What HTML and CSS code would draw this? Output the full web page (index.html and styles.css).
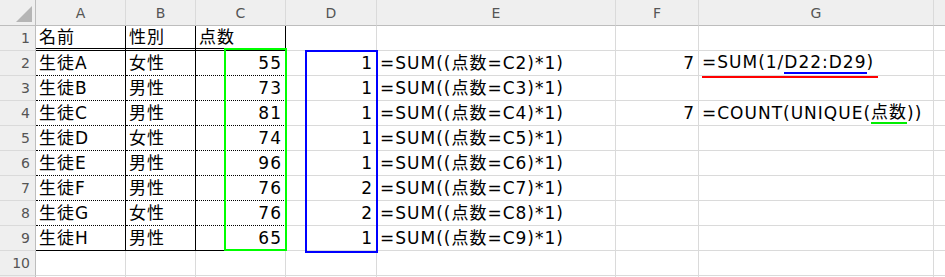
FILE: index.html
```html
<!DOCTYPE html>
<html lang="ja">
<head>
<meta charset="utf-8">
<title>Sheet</title>
<link rel="stylesheet" href="styles.css">
</head>
<body>
<div class="sheet">
  <!-- header row -->
  <div class="c corner"><span class="tri"></span></div>
  <div class="c hd">A</div>
  <div class="c hd">B</div>
  <div class="c hd">C</div>
  <div class="c hd">D</div>
  <div class="c hd">E</div>
  <div class="c hd">F</div>
  <div class="c hd">G</div>
  <div class="c hd last"></div>

  <!-- row 1 -->
  <div class="c rh">1</div>
  <div class="c bl b2">名前</div>
  <div class="c bl b2">性別</div>
  <div class="c bl b2">点数</div>
  <div class="c"></div>
  <div class="c"></div>
  <div class="c"></div>
  <div class="c"></div>
  <div class="c last"></div>

  <!-- row 2 -->
  <div class="c rh">2</div>
  <div class="c bl bd">生徒A</div>
  <div class="c bl bd">女性</div>
  <div class="c bl bd num">55</div>
  <div class="c num">1</div>
  <div class="c">=SUM((点数=C2)*1)</div>
  <div class="c num">7</div>
  <div class="c"><span class="ul-red">=SUM(1/<span class="ul-blue">D22:D29</span>)</span></div>
  <div class="c last"></div>

  <!-- row 3 -->
  <div class="c rh">3</div>
  <div class="c bl bd">生徒B</div>
  <div class="c bl bd">男性</div>
  <div class="c bl bd num">73</div>
  <div class="c num">1</div>
  <div class="c">=SUM((点数=C3)*1)</div>
  <div class="c"></div>
  <div class="c"></div>
  <div class="c last"></div>

  <!-- row 4 -->
  <div class="c rh">4</div>
  <div class="c bl bd">生徒C</div>
  <div class="c bl bd">男性</div>
  <div class="c bl bd num">81</div>
  <div class="c num">1</div>
  <div class="c">=SUM((点数=C4)*1)</div>
  <div class="c num">7</div>
  <div class="c">=COUNT(UNIQUE(<span class="ul-green">点数</span>))</div>
  <div class="c last"></div>

  <!-- row 5 -->
  <div class="c rh">5</div>
  <div class="c bl bd">生徒D</div>
  <div class="c bl bd">女性</div>
  <div class="c bl bd num">74</div>
  <div class="c num">1</div>
  <div class="c">=SUM((点数=C5)*1)</div>
  <div class="c"></div>
  <div class="c"></div>
  <div class="c last"></div>

  <!-- row 6 -->
  <div class="c rh">6</div>
  <div class="c bl bd">生徒E</div>
  <div class="c bl bd">男性</div>
  <div class="c bl bd num">96</div>
  <div class="c num">1</div>
  <div class="c">=SUM((点数=C6)*1)</div>
  <div class="c"></div>
  <div class="c"></div>
  <div class="c last"></div>

  <!-- row 7 -->
  <div class="c rh">7</div>
  <div class="c bl bd">生徒F</div>
  <div class="c bl bd">男性</div>
  <div class="c bl bd num">76</div>
  <div class="c num">2</div>
  <div class="c">=SUM((点数=C7)*1)</div>
  <div class="c"></div>
  <div class="c"></div>
  <div class="c last"></div>

  <!-- row 8 -->
  <div class="c rh">8</div>
  <div class="c bl bd">生徒G</div>
  <div class="c bl bd">女性</div>
  <div class="c bl bd num">76</div>
  <div class="c num">2</div>
  <div class="c">=SUM((点数=C8)*1)</div>
  <div class="c"></div>
  <div class="c"></div>
  <div class="c last"></div>

  <!-- row 9 -->
  <div class="c rh">9</div>
  <div class="c bl bb">生徒H</div>
  <div class="c bl bb">男性</div>
  <div class="c bl bb num">65</div>
  <div class="c num">1</div>
  <div class="c">=SUM((点数=C9)*1)</div>
  <div class="c"></div>
  <div class="c"></div>
  <div class="c last"></div>

  <!-- row 10 -->
  <div class="c rh">10</div>
  <div class="c"></div>
  <div class="c"></div>
  <div class="c"></div>
  <div class="c"></div>
  <div class="c"></div>
  <div class="c"></div>
  <div class="c"></div>
  <div class="c last"></div>

  <!-- row 11 (only its top edge is visible) -->
  <div class="c rh stub"></div>
  <div class="c stub"></div>
  <div class="c stub"></div>
  <div class="c stub"></div>
  <div class="c stub"></div>
  <div class="c stub"></div>
  <div class="c stub"></div>
  <div class="c stub"></div>
  <div class="c last stub"></div>

  <!-- range highlight boxes -->
  <div class="range range-green"></div>
  <div class="range range-blue"></div>
</div>
</body>
</html>
```

FILE: styles.css
```css
html, body {
  margin: 0;
  padding: 0;
  background: #ffffff;
}

body {
  overflow: hidden;
  width: 945px;
  height: 277px;
}

.sheet {
  position: relative;
  display: grid;
  grid-template-columns: 36px 90px 70px 90px 91px 239px 83px 235px 1fr;
  grid-template-rows: 26px repeat(10, 25px) 1px;
  font-family: "DejaVu Sans", "Noto Sans CJK JP", sans-serif;
  font-size: 17px;
  letter-spacing: 1px;
  color: #000000;
}

.c {
  box-sizing: border-box;
  border-right: 1px solid #dadada;
  border-bottom: 1px solid #dadada;
  display: flex;
  align-items: center;
  padding: 0 3px 0 3px;
  white-space: nowrap;
  overflow: visible;
  line-height: 20px;
}

.stub {
  border-bottom: none;
}

.last {
  border-right: none;
}

.hd,
.corner,
.rh {
  background: #efefef;
  color: #555555;
  font-size: 14px;
  letter-spacing: 0;
  border-color: #c8c8c8;
}

.hd {
  justify-content: center;
  border-right-color: #dadada;
  border-bottom-color: #bdbdbd;
}

.corner {
  position: relative;
  border-right-color: #bdbdbd;
  border-bottom-color: #bdbdbd;
}

.tri {
  position: absolute;
  right: 3px;
  bottom: 3px;
  width: 0;
  height: 0;
  border-style: solid;
  border-width: 0 0 16px 16px;
  border-color: transparent transparent #b5b5b5 transparent;
}

.rh {
  justify-content: flex-end;
  padding-right: 5px;
  border-right-color: #bdbdbd;
  border-bottom-color: #dadada;
}

.num {
  justify-content: flex-end;
  padding-right: 3px;
}

.bl {
  border-right: 1px solid #000000;
}

.bd {
  border-bottom: 1px dotted #000000;
}

.bb {
  border-bottom: 1px solid #000000;
}

.b2 {
  border-bottom: 3px double #000000;
}

.ul-red {
  display: inline-block;
  padding-right: 4px;
  padding-bottom: 2px;
  margin-bottom: -4px;
  border-bottom: 2px solid #ff0000;
}

.ul-blue {
  display: inline-block;
  border-bottom: 2px solid #0000ff;
}

.ul-green {
  display: inline-block;
  border-bottom: 2px solid #00ee00;
}

.range {
  position: absolute;
  box-sizing: border-box;
  pointer-events: none;
}

.range-green {
  left: 224px;
  top: 48px;
  width: 63px;
  height: 203px;
  border: 2px solid #00ff00;
}

.range-blue {
  left: 305px;
  top: 50px;
  width: 73px;
  height: 203px;
  border: 2px solid #0000ff;
}
```
